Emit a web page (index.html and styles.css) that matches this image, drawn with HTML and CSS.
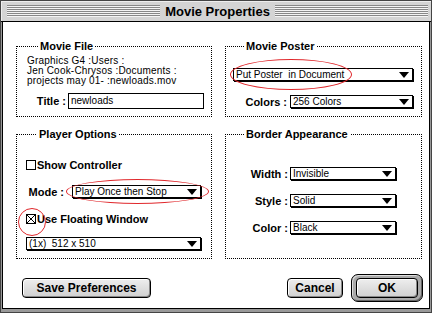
FILE: index.html
```html
<!doctype html>
<html lang="en">
  <head>
    <meta charset="UTF-8" />
    <meta name="viewport" content="width=device-width, initial-scale=1.0" />
    <title>Movie Properties</title>
    <link rel="stylesheet" href="styles.css">
  </head>
  <body>
    <div class="window">
      <div class="titlebar">
        <span class="stripes"></span>
        <h1>Movie Properties</h1>
        <span class="stripes"></span>
      </div>

      <div class="content">
        <div class="groups">
          <fieldset class="group file">
            <legend>Movie File</legend>
            <div class="path">
              Graphics G4 :Users :<br />
              Jen Cook-Chrysos :Documents :<br />
              projects may 01- :newloads.mov
            </div>
            <div class="row title-row">
              <span class="label">Title :</span>
              <div class="field">newloads</div>
            </div>
          </fieldset>

          <fieldset class="group poster">
            <legend>Movie Poster</legend>
            <div class="popup wide">
              <span>Put Poster&nbsp; in Document</span>
              <span class="arrow"></span>
            </div>
            <div class="row colors-row">
              <span class="label">Colors :</span>
              <div class="popup">
                <span>256 Colors</span>
                <span class="arrow"></span>
              </div>
            </div>
          </fieldset>

          <fieldset class="group player">
            <legend>Player Options</legend>
            <div class="row check-row">
              <span class="checkbox"></span>
              <span class="check-label">Show Controller</span>
            </div>
            <div class="row mode-row">
              <span class="label">Mode :</span>
              <div class="popup">
                <span>Play Once then Stop</span>
                <span class="arrow"></span>
              </div>
            </div>
            <div class="row check-row floating">
              <span class="checkbox">
                <svg width="8" height="8" viewBox="0 0 8 8">
                  <path d="M0 0 L8 8 M8 0 L0 8" stroke="#000" stroke-width="1" />
                </svg>
              </span>
              <span class="check-label">Use Floating Window</span>
            </div>
            <div class="popup size">
              <span>(1x)&nbsp; 512 x 510</span>
              <span class="arrow"></span>
            </div>
          </fieldset>

          <fieldset class="group border">
            <legend>Border Appearance</legend>
            <div class="row">
              <span class="label">Width :</span>
              <div class="popup">
                <span>Invisible</span>
                <span class="arrow"></span>
              </div>
            </div>
            <div class="row">
              <span class="label">Style :</span>
              <div class="popup">
                <span>Solid</span>
                <span class="arrow"></span>
              </div>
            </div>
            <div class="row">
              <span class="label">Color :</span>
              <div class="popup">
                <span>Black</span>
                <span class="arrow"></span>
              </div>
            </div>
          </fieldset>
        </div>

        <div class="actions">
          <button class="button save">Save Preferences</button>
          <button class="button cancel">Cancel</button>
          <div class="default-ring">
            <button class="button ok">OK</button>
          </div>
        </div>
      </div>

      <!-- red marks drawn over the dialog -->
      <div class="mark mark-poster"></div>
      <div class="mark mark-mode"></div>
      <div class="mark mark-check"></div>
    </div>
  </body>
</html>
```

FILE: styles.css
```css
* {
  margin: 0;
  padding: 0;
  box-sizing: border-box;
}

body {
  width: 432px;
  height: 313px;
  background: #fff;
  font-family: "Liberation Sans", Arial, sans-serif;
  color: #000;
}

.window {
  position: relative;
  width: 432px;
  height: 313px;
  display: flex;
  flex-direction: column;
  background: #999;
  border: 1px solid #444;
}

.titlebar {
  height: 21px;
  display: flex;
  align-items: center;
  gap: 5px;
  padding: 0 3px 0 6px;
  background: #d4d4d4;
  border-bottom: 1px solid #000;
  box-shadow: inset 1px 1px 0 #eee;
}

.stripes {
  flex: 1;
  height: 12px;
  background: repeating-linear-gradient(
    to bottom,
    #888 0 1px,
    #f4f4f4 1px 2px
  );
}

.titlebar h1 {
  font-size: 13px;
  font-weight: bold;
  line-height: 15px;
}

.content {
  flex: 1;
  background: #fff;
  border-left: 1px solid #000;
  border-right: 1px solid #000;
  border-bottom: 1px solid #000;
  margin: 0 1px 3px 1px;
  padding: 18px 6px 0 13px;
}

.groups {
  display: grid;
  grid-template-columns: 196px 197px;
  grid-template-rows: 77px 131px;
  column-gap: 13px;
  row-gap: 11px;
}

.group {
  border: 1px dotted #000;
  padding: 0;
  min-width: 0;
}

.group legend {
  margin-left: 11px;
  padding: 0 2px;
  font-size: 11px;
  font-weight: bold;
  line-height: 13px;
}

.row {
  display: flex;
  align-items: center;
}

.label {
  font-size: 11px;
  font-weight: bold;
  text-align: right;
  white-space: nowrap;
}

/* movie file */
.file {
  padding-left: 10px;
}

.path {
  font-size: 10px;
  line-height: 10px;
  letter-spacing: 0.2px;
  padding-top: 3px;
}

.title-row {
  margin-top: 7px;
}

.title-row .label {
  width: 39px;
  margin-right: 2px;
}

.field {
  width: 136px;
  height: 16px;
  border: 1px solid #000;
  font-size: 10px;
  line-height: 14px;
  padding-left: 2px;
}

/* popups */
.popup {
  display: flex;
  align-items: center;
  justify-content: space-between;
  height: 13px;
  border: 1px solid #000;
  box-shadow: 1px 1px 0 #000;
  background: #fff;
  font-size: 10px;
  padding: 0 3px 0 2px;
  white-space: nowrap;
}

.arrow {
  width: 0;
  height: 0;
  border-left: 5px solid transparent;
  border-right: 5px solid transparent;
  border-top: 6px solid #000;
}

.poster {
  padding-left: 7px;
}

.poster .wide {
  width: 180px;
  margin-top: 15px;
}

.colors-row {
  margin-top: 14px;
}

.colors-row .label {
  width: 54px;
  margin-right: 3px;
}

.colors-row .popup {
  width: 123px;
}

/* player options */
.player {
  padding-left: 9px;
}

.check-row {
  height: 13px;
  margin-top: 17px;
}

.checkbox {
  width: 10px;
  height: 10px;
  border: 1px solid #000;
  display: flex;
  align-items: center;
  justify-content: center;
  margin-right: 1px;
}

.checkbox svg {
  display: block;
}

.check-label {
  font-size: 11px;
  font-weight: bold;
}

.mode-row {
  margin-top: 14px;
}

.mode-row .label {
  width: 38px;
  margin-right: 8px;
}

.mode-row .popup {
  width: 129px;
}

.floating {
  margin-top: 14px;
}

.size {
  width: 175px;
  margin-top: 12px;
}

/* border appearance */
.border {
  padding-left: 7px;
}

.border .row {
  margin-top: 14px;
}

.border .row:first-of-type {
  margin-top: 26px;
}

.border .label {
  width: 55px;
  margin-right: 2px;
}

.border .popup {
  width: 106px;
}

/* buttons */
.actions {
  display: flex;
  align-items: center;
  margin-top: 15px;
}

.button {
  height: 20px;
  border: 1px solid #000;
  border-radius: 4px;
  background: linear-gradient(#eee, #d0d0d0);
  box-shadow:
    inset 1px 1px 0 #fff,
    inset -1px -1px 0 #888;
  font-family: "Liberation Sans", Arial, sans-serif;
  font-size: 12px;
  font-weight: bold;
  color: #000;
}

.save {
  width: 129px;
  margin-left: 6px;
}

.cancel {
  width: 56px;
  margin-left: auto;
  margin-right: 8px;
}

.default-ring {
  padding: 3px 4px;
  border: 1px solid #000;
  border-radius: 7px;
  background: #aaa;
  box-shadow:
    inset 1px 1px 0 #ddd,
    inset -1px -1px 0 #666;
}

.ok {
  display: block;
  width: 62px;
}

/* annotation marks */
.mark {
  position: absolute;
  border: 1px solid #e0282c;
  border-radius: 50%;
}

.mark-poster {
  left: 229px;
  top: 58px;
  width: 122px;
  height: 31px;
}

.mark-mode {
  left: 65px;
  top: 178px;
  width: 143px;
  height: 25px;
}

.mark-check {
  left: 17px;
  top: 207px;
  width: 28px;
  height: 28px;
}
```
